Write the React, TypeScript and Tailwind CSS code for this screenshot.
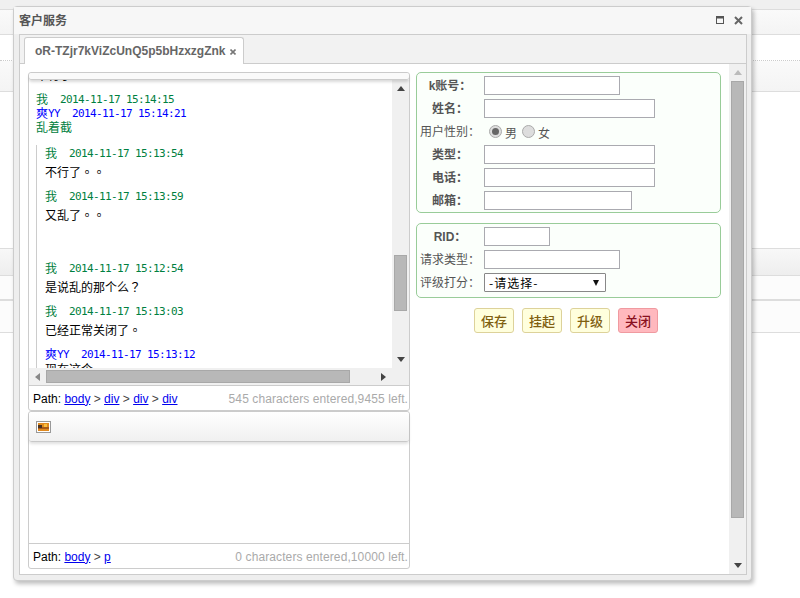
import { ReactNode } from "react";

const SONG = "font-['DejaVu_Sans_Mono','Noto_Sans_CJK_SC',monospace]";
const CJK = "font-['Noto_Sans_CJK_TC',sans-serif]";

function Arrow({ dir }: { dir: "up" | "down" | "left" | "right" }) {
  const points = {
    up: "0,6 8,6 4,1",
    down: "0,1 8,1 4,6",
    left: "6,0 6,8 1,4",
    right: "1,0 1,8 6,4",
  }[dir];
  return (
    <svg width="8" height="8" viewBox="0 0 8 8" className="shrink-0">
      <polygon points={points} fill={dir === "left" ? "#888" : "#444"} />
    </svg>
  );
}

function Who({ name, suffix, time, blue }: { name: string; suffix?: string; time: string; blue?: boolean }) {
  return (
    <div
      className={`${SONG} flex h-[14px] text-[11px] leading-[16px] tracking-[-0.62px] whitespace-pre ${
        blue ? "text-[#0000ff]" : "text-[#008040]"
      }`}
    >
      <span className="text-[12px] tracking-normal">{name}</span>
      {suffix && <span>{suffix}</span>}
      <span className="ml-[12px]">{time}</span>
    </div>
  );
}

function Message({
  name,
  suffix,
  time,
  text,
  blue,
}: {
  name: string;
  suffix?: string;
  time: string;
  text: string;
  blue?: boolean;
}) {
  return (
    <div className="mb-[9px]">
      <Who name={name} suffix={suffix} time={time} blue={blue} />
      <div className={`${CJK} ${blue ? "" : "mt-[4px]"} h-[16px] text-[12px] leading-[16px] text-black`}>{text}</div>
    </div>
  );
}

function StatusBar({ path, count }: { path: string[]; count: string }) {
  return (
    <div className="flex h-[25px] items-center justify-between border-t border-[#cccccc] pl-[4px] pr-[1px] pt-[1px] text-[12px] font-['Liberation_Sans',sans-serif]">
      <div className="text-black">
        Path:{" "}
        {path.map((p, i) => (
          <span key={p + i}>
            <a href="#" className="text-[#0000ee] underline">
              {p}
            </a>
            {i < path.length - 1 && <span className="text-[#444]"> &gt; </span>}
          </span>
        ))}
      </div>
      <div className="text-[#aaaaaa] tracking-[0.1px]">{count}</div>
    </div>
  );
}

function FieldRow({ label, light, children }: { label: string; light?: boolean; children: ReactNode }) {
  return (
    <div className="flex h-[23px] items-center">
      <label
        className={`w-[64px] pr-[4px] text-center text-[12px] leading-[16px] text-[#555555] font-['Liberation_Sans','Noto_Sans_CJK_SC',sans-serif] whitespace-nowrap ${
          light ? "font-normal" : "font-bold"
        }`}
      >
        {label + "\uFF1A"}
      </label>
      {children}
    </div>
  );
}

function TextInput({ width }: { width: string }) {
  return <input type="text" className={`h-[19px] ${width} border border-[#aaaab0] bg-white outline-none`} />;
}

function Radio({ checked }: { checked?: boolean }) {
  return (
    <span className="flex h-[13px] w-[13px] items-center justify-center rounded-full border border-[#aaaaaa] bg-[#dddddd]">
      {checked && <span className="h-[7px] w-[7px] rounded-full bg-[#666666]" />}
    </span>
  );
}

function ActionButton({ children, red }: { children: ReactNode; red?: boolean }) {
  return (
    <button
      className={`h-[25px] w-[40px] rounded-[3px] border text-[13px] font-medium font-['Noto_Sans_CJK_SC',sans-serif] ${
        red
          ? "border-[#f09aa0] bg-[#ffb8be] text-[#8a1020]"
          : "border-[#ddd29a] bg-[#ffffdd] text-[#7f6010]"
      }`}
    >
      {children}
    </button>
  );
}

function BackRow({ h, grey }: { h: string; grey?: boolean }) {
  return (
    <div
      className={`${h} border-b border-[#dddddd] ${
        grey ? "bg-gradient-to-b from-[#fafafa] to-[#f4f4f4]" : "bg-white"
      }`}
    />
  );
}

function ChatPanel() {
  return (
    <div className="rounded-[3px] border border-[#cccccc] bg-white">
      <div className="relative z-10 h-[7px] rounded-[3px] border-b border-[#cccccc] bg-[#fafafa] shadow-[0_2px_3px_rgba(0,0,0,0.15)]" />
      <div className="flex h-[288px]">
        <div className="flex-1 overflow-hidden pl-[7px]">
          <div className={`${CJK} -mt-[13px] h-[16px] text-[12px] leading-[16px] text-black`}>不行了。。</div>
          <div className="h-[9px]" />
          <Who name="我" time="2014-11-17 15:14:15" />
          <Who name="爽" suffix="YY" time="2014-11-17 15:14:21" blue />
          <div className={`${CJK} h-[14px] text-[12px] leading-[14px] text-[#008040]`}>乱着截</div>
          <div className="mt-[11px] border-l border-[#cccccc] pl-[8px] pt-[1px]">
            <Message name="我" time="2014-11-17 15:13:54" text="不行了。。" />
            <Message name="我" time="2014-11-17 15:13:59" text="又乱了。。" />
            <div className="h-[29px]" />
            <Message name="我" time="2014-11-17 15:12:54" text={"是说乱的那个么\uFF1F"} />
            <Message name="我" time="2014-11-17 15:13:03" text="已经正常关闭了。" />
            <Message name="爽" suffix="YY" time="2014-11-17 15:13:12" text="现在这个" blue />
          </div>
        </div>
        <div className="flex w-[17px] flex-col items-center bg-[#f0f0f0]">
          <div className="flex h-[17px] items-center justify-center">
            <Arrow dir="up" />
          </div>
          <div className="mt-[158px] h-[56px] w-[13px] border border-[#a8a8a8] bg-[#b8b8b8]" />
          <div className="flex-1" />
          <div className="flex h-[17px] items-center justify-center">
            <Arrow dir="down" />
          </div>
        </div>
      </div>
      <div className="flex h-[17px] items-center bg-[#f0f0f0]">
        <div className="flex w-[17px] justify-center">
          <Arrow dir="left" />
        </div>
        <div className="h-[13px] w-[304px] border border-[#a8a8a8] bg-[#b8b8b8]" />
        <div className="flex-1" />
        <div className="flex w-[17px] justify-center pl-[1px]">
          <Arrow dir="right" />
        </div>
        <div className="w-[17px]" />
      </div>
      <StatusBar path={["body", "div", "div", "div"]} count="545 characters entered,9455 left." />
    </div>
  );
}

function EditorPanel() {
  return (
    <div className="rounded-[3px] border border-[#cccccc] bg-white">
      <div className="flex h-[30px] items-center rounded-[3px] border-b border-[#c8c8c8] bg-gradient-to-b from-white to-[#f0f0f0] pl-[7px] shadow-[0_2px_3px_rgba(0,0,0,0.12)]">
        <svg width="15" height="12" viewBox="0 0 15 12">
          <rect x="0.5" y="0.5" width="14" height="11" fill="#ffffff" stroke="#999999" />
          <rect x="2" y="2" width="11" height="8" fill="#e08a20" />
          <rect x="2" y="6" width="11" height="2" fill="#a85a18" />
          <rect x="2" y="4" width="4" height="3" fill="#4a3322" />
          <rect x="8" y="3" width="3" height="3" fill="#f8c040" />
        </svg>
      </div>
      <div className="h-[101px]" />
      <StatusBar path={["body", "p"]} count="0 characters entered,10000 left." />
    </div>
  );
}

function CustomerForm() {
  return (
    <div className="flex-1 pl-[6px]">
      <div className="h-[141px] w-[305px] rounded-[5px] border border-[#99cc99] bg-[#fbfffb] px-[3px] pt-[1px]">
        <FieldRow label="k账号">
          <TextInput width="w-[136px]" />
        </FieldRow>
        <FieldRow label="姓名">
          <TextInput width="w-[171px]" />
        </FieldRow>
        <FieldRow label="用户性别" light>
          <div className={`${CJK} flex items-center pl-[5px] text-[12px] text-[#555555]`}>
            <Radio checked />
            <span className="ml-[3px] w-[17px] pt-[2px]">男</span>
            <Radio />
            <span className="ml-[3px] pt-[2px]">女</span>
          </div>
        </FieldRow>
        <FieldRow label="类型">
          <TextInput width="w-[171px]" />
        </FieldRow>
        <FieldRow label="电话">
          <TextInput width="w-[171px]" />
        </FieldRow>
        <FieldRow label="邮箱">
          <TextInput width="w-[148px]" />
        </FieldRow>
      </div>
      <div className="mt-[10px] h-[75px] w-[305px] rounded-[5px] border border-[#99cc99] bg-[#fbfffb] px-[3px] pt-[1px]">
        <FieldRow label="RID">
          <TextInput width="w-[66px]" />
        </FieldRow>
        <FieldRow label="请求类型" light>
          <TextInput width="w-[136px]" />
        </FieldRow>
        <FieldRow label="评级打分" light>
          <div className="flex h-[19px] w-[122px] items-center justify-between rounded-[1px] border border-[#888888] bg-white pl-[4px] pr-[6px] text-[12px] text-black font-['Noto_Sans_CJK_SC',sans-serif]">
            <span className="tracking-[1px]">-请选择-</span>
            <svg width="6" height="6" viewBox="0 0 6 6">
              <polygon points="0,0 6,0 3,6" fill="#111111" />
            </svg>
          </div>
        </FieldRow>
      </div>
      <div className="mt-[10px] flex gap-[8px] pl-[58px]">
        <ActionButton>保存</ActionButton>
        <ActionButton>挂起</ActionButton>
        <ActionButton>升级</ActionButton>
        <ActionButton red>关闭</ActionButton>
      </div>
    </div>
  );
}

export default function App() {
  return (
    <div className="relative h-[598px] w-[800px] overflow-hidden bg-white font-['Liberation_Sans',sans-serif]">
      {/* page behind the dialog */}
      <div className="h-[10px] border-b border-[#dddddd] bg-[#f0f0f0]" />
      <BackRow h="h-[25px]" grey />
      <div className="h-[26px] border-b border-dotted border-[#cccccc] bg-white" />
      <BackRow h="h-[31px]" grey />
      <div className="h-[157px] border-b border-[#dddddd]" />
      <div className="h-[27px] border-b border-[#dddddd] bg-gradient-to-b from-[#f8f8f8] to-[#eeeeee]" />
      <div className="h-[25px] border-b-2 border-[#dddddd] bg-[#fcfcfc]" />
      <div className="h-[32px] border-b border-[#dddddd] bg-[#fcfcfc]" />

      <div className="absolute left-[13px] top-[6px] h-[575px] w-[739px] rounded-[4px] border border-[#cccccc] bg-[#eeeeee] shadow-[2px_3px_4px_rgba(0,0,0,0.25)]">
        <div className="flex h-[27px] items-center justify-between bg-[#f7f7f7] pb-[1px] pl-[5px] pr-[8px]">
          <span className="text-[12px] font-bold text-[#555555] font-['Noto_Sans_CJK_SC',sans-serif]">客户服务</span>
          <div className="flex items-center gap-[9px]">
            <svg width="9" height="8" viewBox="0 0 9 8">
              <rect x="0.5" y="0.5" width="7" height="7" fill="none" stroke="#555555" />
              <rect x="0" y="0" width="8" height="2.5" fill="#555555" />
            </svg>
            <svg width="9" height="9" viewBox="0 0 9 9">
              <path d="M1 1L8 8M8 1L1 8" stroke="#666666" strokeWidth="2" />
            </svg>
          </div>
        </div>
        <div className="mx-[5px] h-[541px] w-[728px] border border-[#cccccc] bg-white">
          <div className="flex h-[29px] items-end border-b border-[#cccccc] bg-[#f2f2f2] pl-[4px]">
            <div className="-mb-[1px] flex h-[27px] w-[220px] items-center rounded-t-[3px] border border-b-0 border-[#cccccc] bg-white pl-[10px] text-[12px] font-bold text-[#666666]">
              oR-TZjr7kViZcUnQ5p5bHzxzgZnk
              <svg width="6" height="6" viewBox="0 0 6 6" className="ml-[5px] mt-[2px]">
                <path d="M0.5 0.5L5.5 5.5M5.5 0.5L0.5 5.5" stroke="#777777" strokeWidth="1.6" />
              </svg>
            </div>
          </div>
          <div className="flex h-[510px]">
            <div className="flex w-[710px] pl-[8px] pt-[8px]">
              <div className="w-[382px]">
                <ChatPanel />
                <EditorPanel />
              </div>
              <CustomerForm />
            </div>
            <div className="flex w-[17px] flex-col items-center bg-[#f0f0f0]">
              <div className="flex h-[17px] items-center justify-center">
                <svg width="8" height="8" viewBox="0 0 8 8">
                  <polygon points="0,6 8,6 4,1" fill="#bbbbbb" />
                </svg>
              </div>
              <div className="h-[437px] w-[13px] border border-[#a8a8a8] bg-[#b8b8b8]" />
              <div className="flex-1" />
              <div className="flex h-[17px] items-center justify-center">
                <Arrow dir="down" />
              </div>
            </div>
          </div>
        </div>
      </div>
    </div>
  );
}
